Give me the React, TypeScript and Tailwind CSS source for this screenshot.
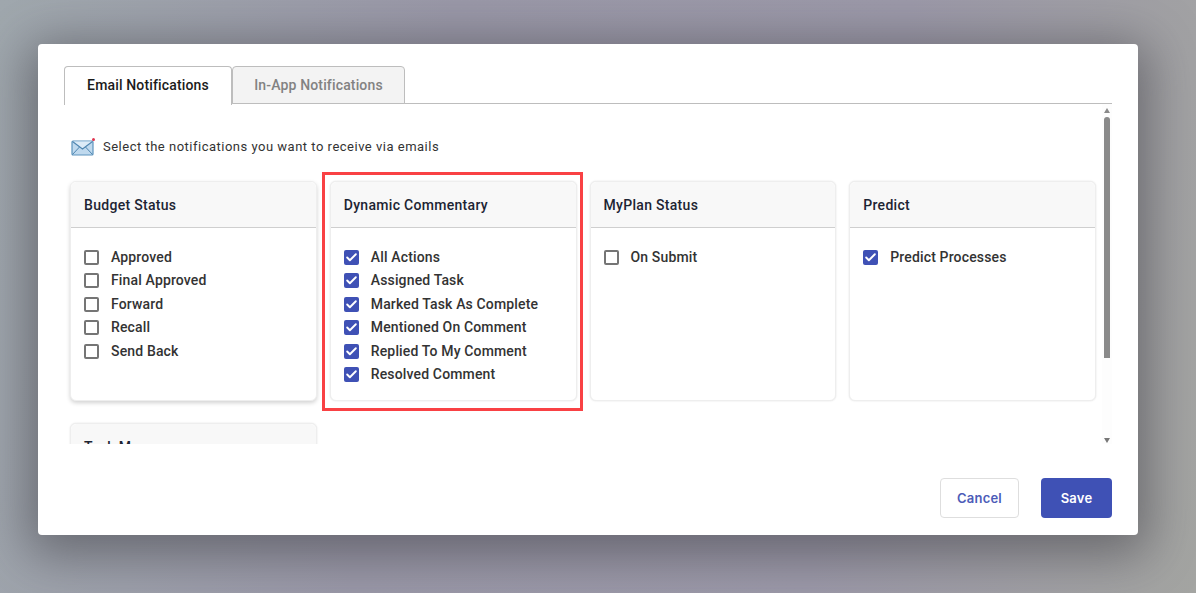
import { Check } from "lucide-react";

const groups = [
  {
    title: "Budget Status",
    checked: false,
    items: ["Approved", "Final Approved", "Forward", "Recall", "Send Back"],
    raised: true,
  },
  {
    title: "Dynamic Commentary",
    checked: true,
    items: [
      "All Actions",
      "Assigned Task",
      "Marked Task As Complete",
      "Mentioned On Comment",
      "Replied To My Comment",
      "Resolved Comment",
    ],
  },
  { title: "MyPlan Status", checked: false, items: ["On Submit"] },
  { title: "Predict", checked: true, items: ["Predict Processes"] },
];

const MailIcon = () => (
  <svg width="24" height="20" viewBox="0 0 24 20" className="shrink-0">
    <rect x="1" y="5" width="21" height="14" rx="1" fill="#bfd9ee" stroke="#5c93bd" strokeWidth="1.2" />
    <path d="M1.5 5.5 L11.5 13 L21.5 5.5" fill="#dcebf7" stroke="#4f86b0" strokeWidth="1.1" />
    <path d="M1.5 18.5 L8.5 11 M21.5 18.5 L14.5 11" fill="none" stroke="#4f86b0" strokeWidth="1" />
    <circle cx="22.5" cy="3.5" r="1.5" fill="#e0344f" />
  </svg>
);

const Box = ({ checked }: { checked: boolean }) =>
  checked ? (
    <span className="flex h-[15px] w-[15px] shrink-0 items-center justify-center rounded-[2px] bg-[#3f51b5]">
      <Check className="h-[13px] w-[13px] text-white" strokeWidth={3.5} />
    </span>
  ) : (
    <span className="h-[15px] w-[15px] shrink-0 rounded-[2px] border-2 border-[#757575] bg-white" />
  );

const Card = ({ title, children, className = "" }: { title: string; children?: React.ReactNode; className?: string }) => (
  <div className={`rounded-md border border-[#eeeeee] bg-white ${className}`}>
    <div className="flex h-[46px] items-center rounded-t-md border-b border-[#cfcfcf] bg-[#f8f8f8] px-[13px] pt-[2px] text-[14px] font-medium tracking-[0.3px] text-[#1d2433]">
      {title}
    </div>
    {children}
  </div>
);

export default function App() {
  return (
    <div
      className="flex h-[593px] w-[1196px] items-start overflow-hidden pl-[38px] pt-[44px] font-['Roboto',sans-serif]"
      style={{ background: "linear-gradient(100deg, #a0a8ae 0%, #9a98a8 35%, #9c99a9 70%, #a4a5a2 100%)" }}
    >
      <div className="relative flex h-[491px] w-[1100px] flex-col rounded bg-white px-[26px] pt-[22px] shadow-[0_10px_50px_10px_rgba(60,60,65,0.55)]">
        {/* tabs */}
        <div className="flex h-[38px] border-b border-[#bdbdbd]">
          <div className="z-10 flex h-[39px] w-[168px] items-center justify-center rounded-t border border-b-0 border-[#bdbdbd] bg-white pb-[1px] text-[14px] font-medium tracking-[0.15px] text-[#1b1b1b]">
            Email Notifications
          </div>
          <div className="flex h-[38px] w-[173px] items-center justify-center rounded-t border border-[#bdbdbd] bg-[#f3f3f3] text-[14px] font-medium tracking-[0.15px] text-[#828282]">
            In-App Notifications
          </div>
        </div>

        {/* scroll area */}
        <div className="relative h-[340px] overflow-hidden">
          <div className="flex h-[77px] items-start gap-[8px] pl-[7px] pt-[32px] text-[13px] tracking-[0.5px] text-[#333333]">
            <MailIcon />
            <span className="mt-[1px] leading-[20px]">Select the notifications you want to receive via emails</span>
          </div>

          <div className="grid w-[1032px] grid-cols-4 gap-x-[13px] gap-y-[22px] pl-[6px]">
            {groups.map((g) => (
              <Card
                key={g.title}
                title={g.title}
                className={`h-[220px] ${g.raised ? "shadow-[0_2px_4px_rgba(0,0,0,0.18)]" : "shadow-[0_0_2px_rgba(0,0,0,0.12)]"}`}
              >
                <div className="flex flex-col pl-[13px] pt-[17.5px]">
                  {g.items.map((item) => (
                    <label key={item} className="flex h-[23.5px] items-center gap-[12px] text-[14px] font-medium tracking-[0.15px] text-[#333333]">
                      <Box checked={g.checked} />
                      {item}
                    </label>
                  ))}
                </div>
              </Card>
            ))}
            <Card title="Task Manager" className="h-[220px] shadow-[0_0_2px_rgba(0,0,0,0.12)]" />
          </div>

          {/* scrollbar */}
          <div className="absolute bottom-0 right-0 top-0 flex w-[10px] flex-col items-center bg-[#fdfdfd] pt-[4px]">
            <span className="h-0 w-0 border-x-[3px] border-b-[5px] border-x-transparent border-b-[#8a8a8a]" />
            <span className="mt-[4px] h-[241px] w-[6px] rounded-t-[3px] bg-[#8a8a8a]" />
            <span className="mb-[1px] mt-auto h-0 w-0 border-x-[3px] border-t-[5px] border-x-transparent border-t-[#777777]" />
          </div>
        </div>

        {/* footer */}
        <div className="flex justify-end gap-[22px] pt-[34px]">
          <button className="h-[40px] w-[79px] rounded border border-[#dedede] bg-white pt-[1px] font-['Inter',sans-serif] text-[13px] font-semibold tracking-[0.2px] text-[#4c5cb8]">
            Cancel
          </button>
          <button className="h-[40px] w-[71px] rounded bg-[#3f51b5] pt-[1px] font-['Inter',sans-serif] text-[13px] font-semibold tracking-[0.2px] text-white">
            Save
          </button>
        </div>

        {/* annotation round the highlighted card */}
        <div className="pointer-events-none absolute left-[284px] top-[128px] h-[239px] w-[261px] border-[3px] border-[#f94144]" />
      </div>
    </div>
  );
}
